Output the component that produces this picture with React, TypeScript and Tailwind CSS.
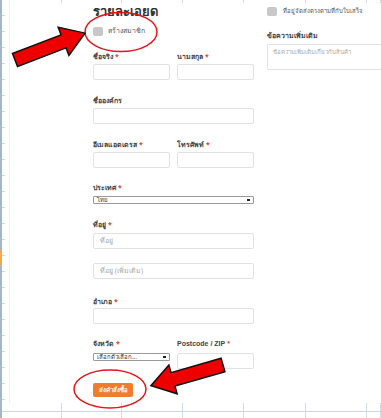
import React from "react"

function Label({ text, req }: { text: string; req?: boolean }) {
  return (
    <div className="h-[10px] leading-[10px] text-[7px] font-bold text-[#444] whitespace-nowrap">
      {text}
      {req && <span className="text-[#e2401c] ml-[2px]">*</span>}
    </div>
  )
}

function Input({ placeholder, h = "h-[16px]" }: { placeholder?: string; h?: string }) {
  return (
    <div className={`${h} w-full border border-[#e2e2e2] rounded-[2px] bg-white flex items-center pl-[6px] text-[7px] text-[#aaa] whitespace-nowrap`}>
      {placeholder}
    </div>
  )
}

function Select({ value }: { value: string }) {
  return (
    <div className="h-[8px] w-full border border-[#9a9a9a] rounded-[1px] bg-white flex items-center justify-between pl-[3px] pr-[3px] text-[6px] leading-[6px] text-[#333] whitespace-nowrap overflow-hidden">
      <span>{value}</span>
      <span className="w-[3px] h-[2px] bg-[#222]" />
    </div>
  )
}

function Arrow({ transform }: { transform: string }) {
  return (
    <polygon
      points="0,-7 52,-7 52,-15 75,0 52,15 52,7 0,7"
      transform={transform}
      fill="#ee0000"
      stroke="#111"
      strokeWidth="1.5"
      strokeLinejoin="miter"
    />
  )
}

export default function App() {
  const cells = ["w-[52px]", "w-[60px]", "w-[61px]", "w-[61px]", "w-[62px]", "w-[61px]", "flex-1"]
  return (
    <div
      className="relative w-[381px] h-[418px] overflow-hidden bg-white flex flex-col"
      style={{ fontFamily: '"Noto Sans", "DejaVu Sans", Tahoma, sans-serif' }}
    >
      <div className="flex h-[403px]">
        {/* row headers gutter */}
        <div className="w-[10px] shrink-0 border-l-2 border-[#a3b6ca] border-r border-r-[#f1f1f1] bg-[repeating-linear-gradient(to_bottom,transparent_0px,transparent_15px,#d6d6d6_15px,#d6d6d6_16px)] bg-[length:3px_16px] bg-no-repeat bg-repeat-y">
          <div className="mt-[250px] h-[15px] w-[2px] -ml-[2px] bg-[#f3a84c]" />
        </div>

        <div className="flex-1 flex flex-col overflow-hidden">
          {/* column grid top */}
          <div className="flex h-[3px] shrink-0">
            {cells.map((c, i) => (
              <div key={i} className={`${c} border-r border-[#d3dbe4]`} />
            ))}
          </div>

          <div className="flex pl-[83px] gap-[13px]">
            {/* left column */}
            <div className="w-[161px] shrink-0 flex flex-col">
              <div className="mt-[5px] h-[8px] overflow-hidden flex items-end">
                <div className="text-[13px] font-bold leading-[13px] text-[#333] -mb-[2px]">รายละเอียด</div>
              </div>
              <div className="mt-[11px] h-[9px] flex items-center">
                <div className="w-[10px] h-[9px] rounded-[2px] bg-[#c8c8c8]" />
                <span className="ml-[5px] text-[7px] text-[#555]">สร้างสมาชิก</span>
              </div>

              <div className="mt-[16px] grid grid-cols-2 gap-x-[7px]">
                <Label text="ชื่อจริง" req />
                <Label text="นามสกุล" req />
                <div className="mt-[2px]"><Input /></div>
                <div className="mt-[2px]"><Input /></div>
              </div>

              <div className="mt-[16px]">
                <Label text="ชื่อองค์กร" />
                <div className="mt-[2px]"><Input /></div>
              </div>

              <div className="mt-[16px] grid grid-cols-2 gap-x-[7px]">
                <Label text="อีเมลแอดเดรส" req />
                <Label text="โทรศัพท์" req />
                <div className="mt-[2px]"><Input /></div>
                <div className="mt-[2px]"><Input /></div>
              </div>

              <div className="mt-[15px]">
                <Label text="ประเทศ" req />
                <div className="mt-[3px]"><Select value="ไทย" /></div>
              </div>

              <div className="mt-[16px]">
                <Label text="ที่อยู่" req />
                <div className="mt-[3px]"><Input placeholder="ที่อยู่" /></div>
                <div className="mt-[14px]"><Input placeholder="ที่อยู่ (เพิ่มเติม)" /></div>
              </div>

              <div className="mt-[18px]">
                <Label text="อำเภอ" req />
                <div className="mt-[1px]"><Input /></div>
              </div>

              <div className="mt-[15px] grid grid-cols-2 gap-x-[7px] items-start">
                <Label text="จังหวัด" req />
                <div className="h-[10px] leading-[10px] text-[7px] font-bold text-[#444] whitespace-nowrap" style={{ fontFamily: '"Liberation Sans", Arial, sans-serif' }}>
                  Postcode / ZIP<span className="text-[#e2401c] ml-[2px]">*</span>
                </div>
                <div className="mt-[4px]">
                  <div className="h-[7px]"><Select value="เลือกตัวเลือก..." /></div>
                </div>
                <div className="mt-[4px]"><Input /></div>
              </div>

              <button className="mt-[14px] w-[40px] h-[14px] rounded-[2px] bg-[#ef7d2e] text-white text-[6px] font-bold leading-none flex items-center justify-center">
                ส่งคำสั่งซื้อ
              </button>
            </div>

            {/* right column */}
            <div className="w-[130px] shrink-0 flex flex-col">
              <div className="mt-[4px] h-[9px] flex items-center">
                <div className="w-[10px] h-[9px] rounded-[2px] bg-[#c8c8c8]" />
                <span className="ml-[6px] text-[6px] text-[#555] whitespace-nowrap">ที่อยู่จัดส่งตรงตามที่กับใบเสร็จ</span>
              </div>
              <div className="mt-[15px]">
                <Label text="ข้อความเพิ่มเติม" />
              </div>
              <div className="mt-[3px] h-[26px] border border-[#e2e2e2] rounded-[2px] pl-[5px] pt-[4px] text-[6px] leading-[7px] text-[#aaa] whitespace-nowrap">
                ข้อความเพิ่มเติมเกี่ยวกับสินค้า
              </div>
            </div>
          </div>
        </div>
      </div>

      {/* bottom grid */}
      <div className="flex h-[15px]">
        <div className="w-[10px] shrink-0 border-l-2 border-[#a3b6ca] flex flex-col">
          <div className="h-[8px]" />
          <div className="h-px bg-[#cdd5de]" />
        </div>
        <div className="flex-1 flex flex-col">
          <div className="flex h-[8px]">
            {cells.map((c, i) => (
              <div key={i} className={`${c} border-r border-[#d3dbe4]`} />
            ))}
          </div>
          <div className="h-px bg-[#cdd5de]" />
          <div className="flex flex-1">
            {cells.map((c, i) => (
              <div key={i} className={`${c} border-r border-[#d3dbe4]`} />
            ))}
          </div>
        </div>
      </div>

      {/* annotations */}
      <svg className="absolute inset-0 pointer-events-none" width="381" height="418" viewBox="0 0 381 418">
        <ellipse cx="121" cy="32" rx="36" ry="19.5" fill="none" stroke="#e0161b" strokeWidth="1.5" />
        <ellipse cx="110" cy="389" rx="36" ry="19" fill="none" stroke="#e0161b" strokeWidth="1.5" />
        <Arrow transform="translate(15 60) rotate(-21)" />
        <Arrow transform="translate(223 365) rotate(164)" />
      </svg>
    </div>
  )
}
